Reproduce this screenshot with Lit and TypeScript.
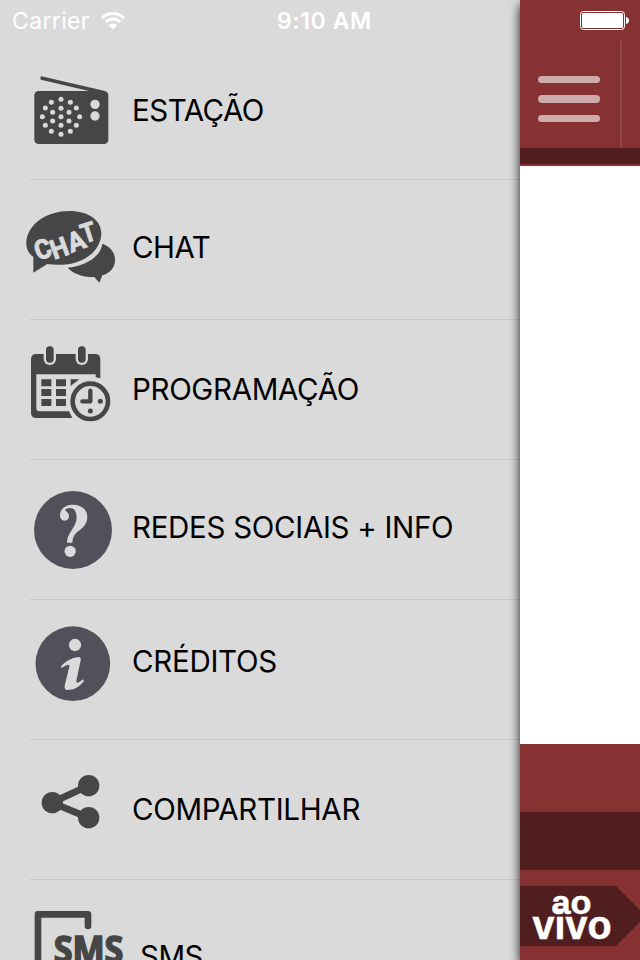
import { LitElement, html, css, svg } from "lit";
import { customElement } from "lit/decorators.js";

const dots = [
  [138, 118], [109, 127], [166, 127], [91, 144], [138, 145], [184, 144],
  [113, 157], [162, 157], [82, 170], [138, 170], [194, 170], [113, 183],
  [162, 183], [91, 196], [138, 196], [184, 196], [109, 214], [166, 214], [138, 223],
];

const radio = svg`
  <path class="ink" d="M79 49L270 93H222L78 59Q73 53 79 49Z"/>
  <rect class="ink" x="58" y="93" width="222" height="159" rx="13"/>
  ${dots.map(([x, y]) => svg`<circle class="bg" cx=${x} cy=${y} r="7.500"/>`)}
  <circle class="bg" cx="240" cy="133" r="14"/><circle class="bg" cx="240" cy="168" r="14"/>`;

const chat = svg`
  <path class="ink" d="M262 131C288 140 301 160 300 182C299 204 284 219 262 226L253 248L238 231C204 232 174 221 158 203C206 199 256 174 262 131Z"/>
  <path class="ink" d="M55 218V171C39 159 33 145 34 126C38 74 92 33 163 33C222 33 259 61 259 101C257 154 203 194 139 194C124 195 111 194 97 192Z"/>
  <g class="bg chat" text-anchor="middle">
    <text transform="translate(93 174) rotate(-20)" textLength="49" lengthAdjust="spacingAndGlyphs">C</text>
    <text transform="translate(142 170) rotate(-20)" textLength="52" lengthAdjust="spacingAndGlyphs">H</text>
    <text transform="translate(193 149) rotate(-20)" textLength="52" lengthAdjust="spacingAndGlyphs">A</text>
    <text transform="translate(229 124) rotate(-18)" textLength="44" lengthAdjust="spacingAndGlyphs">T</text>
  </g>`;

const calendar = svg`
  <path class="ink" d="M64 57H240Q256 57 256 73V130L242 127V118H64V220Q64 229 73 229H162L172 249H64Q48 249 48 233V73Q48 57 64 57Z"/>
  <rect class="bg" x="86" y="30" width="37" height="60" rx="18"/><rect class="bg" x="182" y="30" width="37" height="60" rx="18"/>
  <rect class="ink" x="93" y="34" width="23" height="49" rx="11"/><rect class="ink" x="189" y="34" width="23" height="49" rx="11"/>
  <path class="ink" d="M79 133h30v21H79zM123 133h30v21h-30zM79 162h30v21H79zM123 162h30v21h-30zM79 192h30v21H79zM123 192h30v21h-30zM167 133h26l-26 20z"/>
  <circle class="bg" cx="226" cy="199" r="67"/>
  <circle cx="226" cy="199" r="53" fill="none" stroke="#464646" stroke-width="14"/>
  <path d="M226 167V199H202" fill="none" stroke="#464646" stroke-width="13" stroke-linecap="round" stroke-linejoin="round"/>
  <circle class="ink" cx="256" cy="199" r="7.5"/><circle class="ink" cx="226" cy="228" r="7.5"/>`;

const question = svg`
  <circle class="slate" cx="174" cy="150" r="117"/>
  <path class="bg" d="M156 188C155 159 185 143 185 112C185 94 177 84 165 84C157 84 151 87 151 90C151 94 162 98 162 108C162 117 156 122 149 122C140 122 135 115 135 106C135 87 151 74 174 74C199 74 217 89 217 111C217 132 203 145 187 156C177 164 174 172 172 188Z"/>
  <circle class="bg" cx="165.500" cy="214" r="17"/>`;

const info = svg`
  <circle class="slate" cx="173.500" cy="146" r="112"/>
  <circle class="bg" cx="180" cy="90" r="18.500"/>
  <path class="bg" d="M138 154C151 139 171 128 190 126Q199 126 197 136L184 197Q183 203 188 203C194 202 199 196 204 193L207 198C193 216 177 225 157 225Q147 224 149 212L163 155Q165 149 159 149C152 150 145 157 140 159Z"/>`;

const share = svg`
  <path d="M221 77L111 128L221 173" fill="none" stroke="#464646" stroke-width="21"/>
  <circle class="ink" cx="112" cy="128" r="32"/><circle class="ink" cx="221" cy="77" r="32"/><circle class="ink" cx="221" cy="173" r="32"/>`;

const sms = svg`
  <path d="M69 300V73H219V108" fill="none" stroke="#464646" stroke-width="20" stroke-linejoin="round" stroke-linecap="round"/>
  <text class="ink sms" x="116" y="219" textLength="209" lengthAdjust="spacingAndGlyphs">SMS</text>`;

// gap: icon offset from the row top; shift: label offset from the row centre
const items = [
  { label: "ESTAÇÃO", icon: radio, gap: 20, shift: 0, track: -0.5 },
  { label: "CHAT", icon: chat, gap: 20, shift: -3, track: -0.5 },
  { label: "PROGRAMAÇÃO", icon: calendar, gap: 15, shift: -1, track: -0.34 },
  { label: "REDES SOCIAIS + INFO", icon: question, gap: 20, shift: -3, track: -0.3 },
  { label: "CRÉDITOS", icon: info, gap: 15, shift: -9, track: -0.28 },
  { label: "COMPARTILHAR", icon: share, gap: 20, shift: -1, track: -0.3 },
  { label: "SMS", icon: sms, gap: 10, shift: 6, track: -0.5 },
];

@customElement("app-root")
export class AppRoot extends LitElement {
  static styles = css`
    :host { display: block; position: relative; width: 640px; height: 960px; overflow: hidden; background: #dadada; font-family: Inter, "Liberation Sans", sans-serif; }
    .layout { display: flex; height: 960px; }
    .menu { width: 520px; height: 960px; box-sizing: border-box; padding-top: 40px; overflow: hidden; }
    .row { display: flex; height: 140px; align-items: flex-start; background: linear-gradient(#c8c8c8, #c8c8c8) 30px 139px / 490px 1px no-repeat; }
    .row svg { width: 120px; height: 100px; margin-left: 15px; flex: none; overflow: visible; }
    .label { height: 140px; margin-left: -3px; font-size: 29.5px; color: #000; white-space: nowrap; }
    .row:last-child .label { margin-left: 5px; }
    .ink { fill: #464646; }
    .bg { fill: #dadada; }
    .slate { fill: #52515b; }
    .chat { font: bold 80px Roboto, sans-serif; stroke: #dadada; stroke-width: 3; }
    .sms { font: bold 112px "Open Sans", sans-serif; stroke: #464646; stroke-width: 5; }
    .page { width: 120px; height: 960px; position: relative; display: flex; flex-direction: column; background: #863232; box-shadow: 0 5px 10px 0 rgba(0, 0, 0, 0.9); }
    .header { height: 148px; box-sizing: border-box; padding-top: 40px; display: flex; }
    .burger { width: 62px; display: flex; flex-direction: column; gap: 12px; padding: 35.5px 19.6px 0 18.4px; }
    .burger i { height: 7.5px; border-radius: 4px; background: #cfabab; }
    .divider { width: 2px; height: 107px; background: #914747; }
    .strip { height: 16px; background: #501e1e; margin-bottom: 2px; }
    .content { height: 578px; background: #fff; margin-bottom: 68px; }
    .band { height: 58px; background: #501e1e; margin-bottom: 16px; }
    .live { width: 120px; height: 60px; display: block; }
    .live text { font-family: "Liberation Sans", Arial, sans-serif; font-weight: bold; fill: #fff; stroke: #fff; stroke-width: 0.5; }
    .status { position: absolute; inset: 0 0 auto 0; height: 40px; color: #fff; display: grid; grid-template-columns: 260px 129px 1fr; align-items: center; font-size: 23px; }
    .carrier { display: flex; align-items: center; padding: 1px 0 0 12px; gap: 10px; letter-spacing: 0.35px; }
    .wifi { width: 26px; height: 20px; }
    .time { text-align: center; font-weight: 600; letter-spacing: 0.6px; padding-top: 1px; }
    .battery { width: 50px; height: 20px; justify-self: end; margin-right: 10px; }
  `;

  render() {
    return html`
      <div class="layout">
        <nav class="menu">
          ${items.map((it) => html`
            <div class="row">
              <svg viewBox="0 0 360 300" style="margin-top:${it.gap}px">${it.icon}</svg>
              <span class="label" style="line-height:${141 + it.shift * 2}px;letter-spacing:${it.track}px">${it.label}</span>
            </div>`)}
        </nav>
        <main class="page">
          <div class="header">
            <div class="burger"><i></i><i></i><i></i></div>
            <div class="divider"></div>
          </div>
          <div class="strip"></div>
          <div class="content"></div>
          <div class="band"></div>
          <svg class="live" viewBox="0 0 120 60">
            <path d="M0 0H96L126 30L96 60H0Z" fill="#501e1e"/>
            <text x="31.500" y="28" font-size="34" textLength="40" lengthAdjust="spacingAndGlyphs">ao</text>
            <text x="12.500" y="53" font-size="40" textLength="79" lengthAdjust="spacingAndGlyphs">vivo</text>
          </svg>
        </main>
      </div>
      <div class="status">
        <div class="carrier">Carrier
          <svg class="wifi" viewBox="0 0 26 20">
            <path d="M2 7.200A15.500 15.500 0 0 1 24 7.200M5.700 11A10.300 10.300 0 0 1 20.300 11" fill="none" stroke="#fff" stroke-width="3"/>
            <path d="M8.700 14.200A6.200 6.200 0 0 1 17.300 14.200L13 18.500Z" fill="#fff"/>
          </svg>
        </div>
        <div class="time">9:10 AM</div>
        <svg class="battery" viewBox="0 0 50 20">
          <rect x=".5" y="1.500" width="44" height="18" rx="3" fill="none" stroke="#fff"/>
          <rect x="2" y="3" width="41" height="15" rx="1.500" fill="#fff"/>
          <path d="M46 7Q49 7.500 49 10.500T46 14Z" fill="#fff"/>
        </svg>
      </div>`;
  }
}
